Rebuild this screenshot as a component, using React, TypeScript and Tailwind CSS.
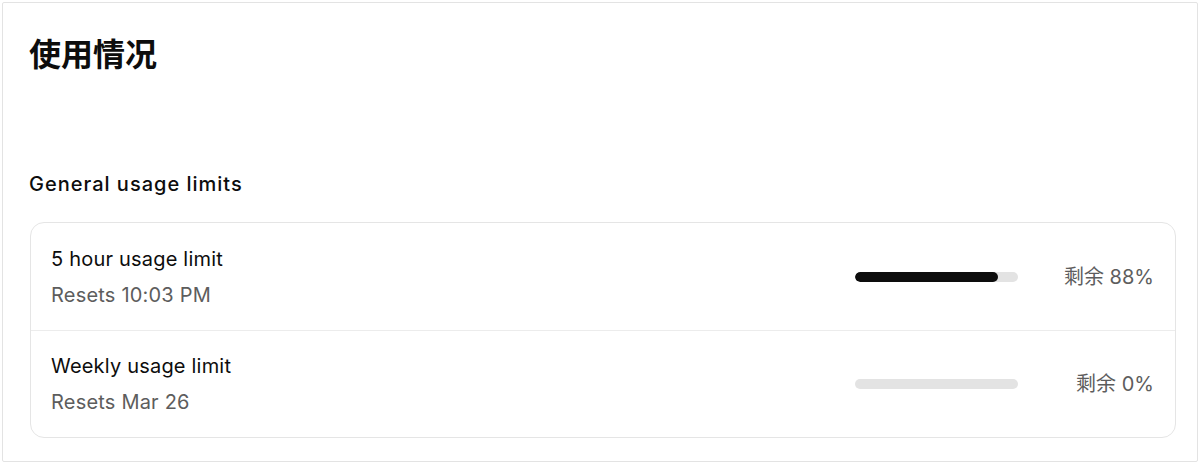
const rows = [
  { title: '5 hour usage limit', reset: 'Resets 10:03 PM', remaining: 88 },
  { title: 'Weekly usage limit', reset: 'Resets Mar 26', remaining: 0 },
];

export default function App() {
  return (
    <div
      className="w-[1200px] h-[464px] bg-white p-[2px] text-[#0d0d0d]"
      style={{ fontFamily: 'Inter, "Noto Sans CJK SC", sans-serif' }}
    >
      <div className="h-full border border-[#e3e3e3] rounded-[2px] pl-[26px] pr-[21px] pt-[30px]">
        <h1 className="text-[32px] leading-[44px] font-bold">使用情况</h1>

        <h2 className="mt-[93px] text-[20px] leading-[28px] font-medium tracking-[0.05em]">General usage limits</h2>

        <div className="mt-[24px] ml-[1px] border border-[#e5e5e5] rounded-[14px]">
          {rows.map((r, i) => (
            <div
              key={r.title}
              className={`flex items-center h-[107px] pl-[20px] pr-[21px] ${i > 0 ? 'border-t border-[#ececec]' : ''}`}
            >
              <div className="flex-1">
                <div className="text-[20px] leading-[28px] tracking-[0.01em]">{r.title}</div>
                <div className="mt-[8px] text-[20px] leading-[28px] tracking-[0.01em] text-[#5d5d5d]">{r.reset}</div>
              </div>
              <div className="w-[163px] h-[10px] bg-[#e3e3e3] rounded-full overflow-hidden">
                <div className="h-full bg-[#0d0d0d] rounded-full" style={{ width: `${r.remaining}%` }} />
              </div>
              <div className="w-[136px] text-right text-[20px] leading-[28px] text-[#5d5d5d]">剩余 {r.remaining}%</div>
            </div>
          ))}
        </div>
      </div>
    </div>
  );
}
